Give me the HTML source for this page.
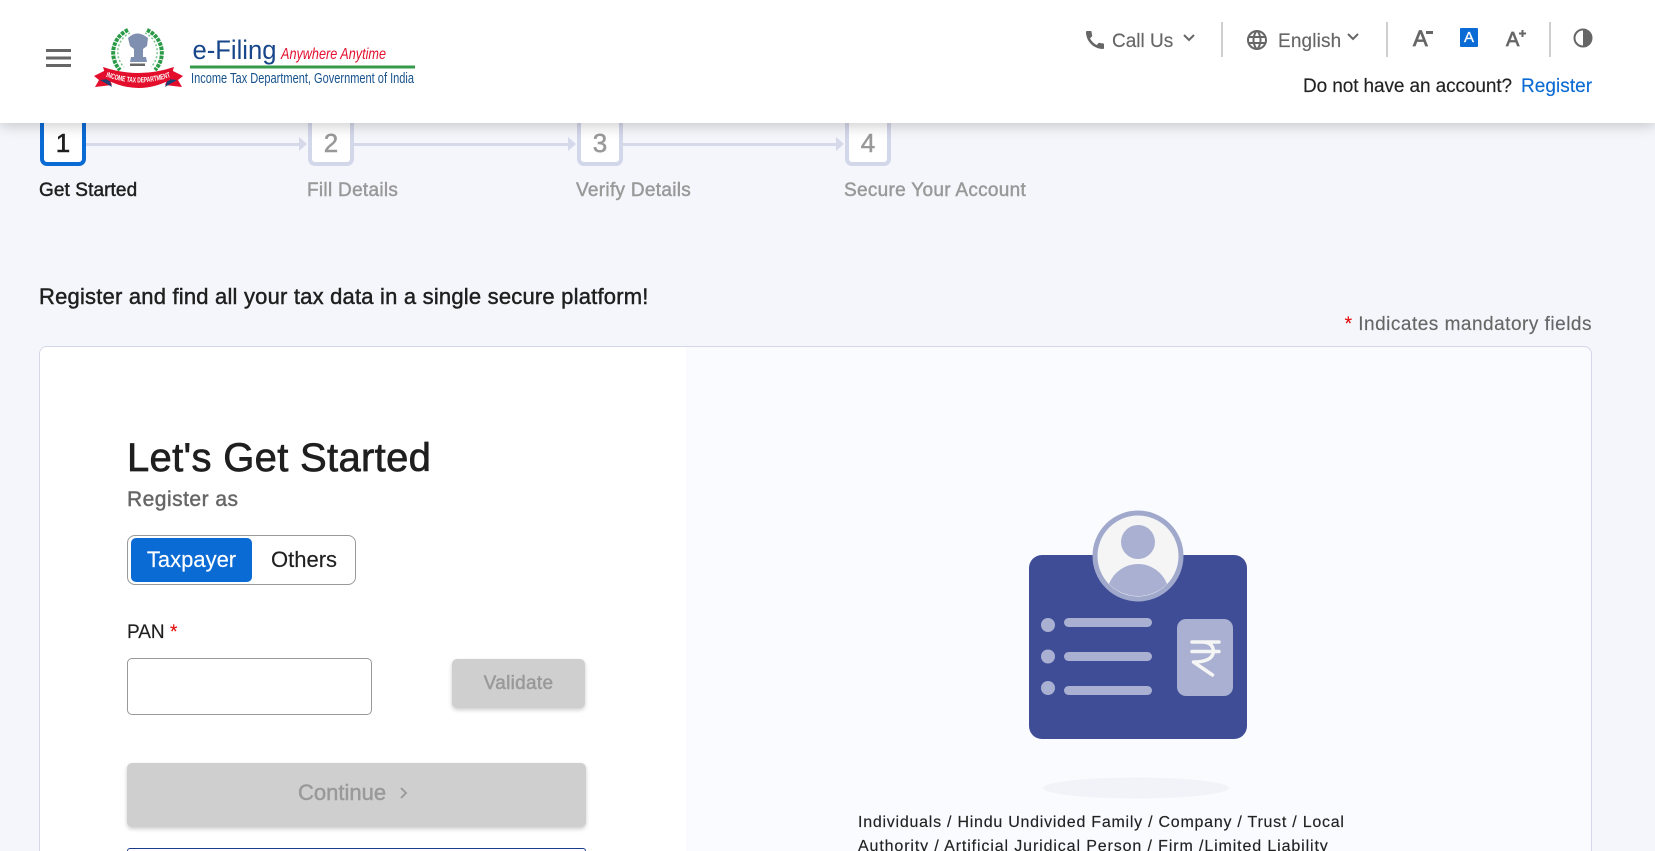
<!DOCTYPE html>
<html lang="en"><head><meta charset="utf-8"><title>Register - e-Filing</title>
<style>
*{box-sizing:border-box}
html{margin:0;padding:0;width:1655px;height:851px;overflow:hidden}
body{margin:0;padding:0;position:relative;width:1655px;height:851px;overflow:hidden;background:#f5f6fb;font-family:"Liberation Sans",sans-serif;color:#1f1f1f;-webkit-text-stroke:.15px}
.t{position:absolute;white-space:nowrap;line-height:24px;height:24px}
.m{-webkit-text-stroke:.45px}
header{position:absolute;left:0;top:0;width:1655px;height:123px;background:#fff;box-shadow:0 2px 14px rgba(0,0,0,.22);z-index:5}
.div{position:absolute;top:22px;width:2px;height:35px;background:#cfcfcf}
.g{color:#666}
.box{position:absolute;top:112px;width:46px;height:54px;border:4px solid #d3d7ea;border-radius:7px;background:#fff;color:#999;font-size:26px;-webkit-text-stroke:.5px;text-align:center;line-height:56px}
.box span{display:block;margin-top:-1px}
.ln{position:absolute;top:142.5px;height:3px;background:#d5d9ea}
.ar{position:absolute;top:137px;width:0;height:0;border-left:8px solid #d5d9ea;border-top:7px solid transparent;border-bottom:7px solid transparent}
.st{font-size:19px;color:#999;top:179px;letter-spacing:.3px}
.card{position:absolute;left:39px;top:346px;width:1553px;height:505px;border:1px solid #d4d7e8;border-bottom:0;border-radius:8px 8px 0 0;background:#fafbfe;overflow:hidden}
.left{position:absolute;left:0;top:0;width:646px;height:100%;background:#fff}
svg text{-webkit-text-stroke:0}
</style></head><body>
<header>
<svg style="position:absolute;left:42px;top:44px" width="32" height="28" viewBox="0 0 32 28"><g fill="#666"><rect x="4" y="5" width="25" height="3"/><rect x="4" y="12.500" width="25" height="3"/><rect x="4" y="20" width="25" height="3"/></g></svg>
<svg style="position:absolute;left:90px;top:26px" width="100" height="68" viewBox="90 26 100 68">
<path d="M128 30A25 25 0 0 0 120 70M147 30A25 25 0 0 1 155 70" fill="none" stroke="#2b9a47" stroke-width="4" stroke-dasharray="3.500 1"/>
<path d="M130 33A21 21 0 0 0 124 67M145 33A21 21 0 0 1 151 67" fill="none" stroke="#7cc08b" stroke-width="1.500" stroke-dasharray="2 2"/>
<path d="M128 38q9-9 20 0l-1 8-4 3v8h3l1 5h-17l1-5h3v-8l-4-3z" fill="#7e8fb0"/>
<rect x="130" y="63.500" width="15" height="2.500" fill="#666"/>
<path d="M106 71L94 77L99 81L95 88L112 86ZM171 71L183 77L178 81L182 88L165 86Z" fill="#e30d2c" transform="translate(0 -1)"/>
<path d="M100 80L109 79L112 87ZM177 80L168 79L165 87Z" fill="#1e3f73"/>
<path d="M103 67Q138.500 79 174 67L170 80Q138.500 96 107 80Z" fill="#e30d2c"/>
<path id="rb" d="M104 76Q138.500 89 173 76" fill="none"/>
<text font-family="Liberation Sans,sans-serif" font-size="7.500" font-weight="700" fill="#fff"><textPath href="#rb" textLength="66" lengthAdjust="spacingAndGlyphs" startOffset="2">INCOME TAX DEPARTMENT</textPath></text>
</svg>
<svg style="position:absolute;left:185px;top:30px" width="240" height="60" viewBox="185 30 240 60">
<text x="192.500" y="59" font-size="27" fill="#17468a" textLength="84" lengthAdjust="spacingAndGlyphs">e-Filing</text>
<text x="281" y="59" font-size="16" font-style="italic" fill="#e4102f" textLength="105" lengthAdjust="spacingAndGlyphs">Anywhere Anytime</text>
<rect x="190" y="65.500" width="225" height="3" fill="#359b4a"/>
<text x="191" y="83" font-size="15" fill="#17528c" textLength="223" lengthAdjust="spacingAndGlyphs">Income Tax Department, Government of India</text>
</svg>
<svg style="position:absolute;left:1083px;top:28px" width="24" height="24" viewBox="0 0 24 24"><path fill="#666" d="M20.010 15.380c-1.230 0-2.420-.2-3.530-.56-.35-.12-.74-.03-1.010.24l-1.570 1.970c-2.830-1.350-5.480-3.900-6.890-6.830l1.950-1.660c.27-.28.35-.67.24-1.020-.37-1.110-.56-2.300-.56-3.530 0-.54-.45-.99-.99-.99H4.190C3.650 3 3 3.240 3 3.990 3 13.280 10.730 21 20.010 21c.71 0 .99-.63.99-1.180v-3.450c0-.54-.45-.99-.99-.99z"/></svg>
<span class="t g" style="left:1112px;top:30px;font-size:19px">Call Us</span>
<svg style="position:absolute;left:1180px;top:29px" width="18" height="18" viewBox="0 0 18 18"><path fill="none" stroke="#666" stroke-width="2" d="M4 6l5 5 5-5"/></svg>
<i class="div" style="left:1221px"></i>
<svg style="position:absolute;left:1245px;top:28px" width="24" height="24" viewBox="0 0 24 24"><path fill="#666" d="M11.990 2C6.470 2 2 6.480 2 12s4.470 10 9.990 10C17.520 22 22 17.520 22 12S17.520 2 11.990 2zm6.930 6h-2.950c-.32-1.250-.78-2.450-1.380-3.560 1.840.63 3.370 1.910 4.330 3.560zM12 4.040c.83 1.200 1.480 2.530 1.910 3.960h-3.820c.43-1.430 1.080-2.760 1.910-3.960zM4.260 14C4.100 13.360 4 12.690 4 12s.1-1.360.26-2h3.380c-.08.66-.14 1.320-.14 2 0 .68.06 1.340.14 2H4.260zm.82 2h2.950c.32 1.250.78 2.450 1.380 3.560-1.840-.63-3.370-1.900-4.330-3.560zm2.950-8H5.080c.96-1.660 2.490-2.930 4.330-3.560C8.810 5.550 8.350 6.750 8.030 8zM12 19.960c-.83-1.200-1.480-2.530-1.910-3.960h3.820c-.43 1.430-1.080 2.760-1.910 3.960zM14.340 14H9.660c-.09-.66-.16-1.320-.16-2 0-.68.07-1.350.16-2h4.680c.09.65.16 1.320.16 2 0 .68-.07 1.340-.16 2zm.25 5.560c.6-1.110 1.060-2.310 1.380-3.560h2.950c-.96 1.650-2.490 2.930-4.330 3.560zM16.360 14c.08-.66.14-1.320.14-2 0-.68-.06-1.340-.14-2h3.380c.16.64.26 1.310.26 2s-.1 1.360-.26 2h-3.380z"/></svg>
<span class="t g" style="left:1278px;top:30px;font-size:19px;letter-spacing:.15px">English</span>
<svg style="position:absolute;left:1344px;top:29px" width="18" height="18" viewBox="0 0 18 18"><path fill="none" stroke="#666" stroke-width="2" d="M4 5l5 5 5-5"/></svg>
<i class="div" style="left:1386px"></i>
<span class="t g" style="left:1413px;top:27px;font-size:22px;width:16px;-webkit-text-stroke:.8px">A</span>
<i style="position:absolute;left:1426px;top:31px;width:7px;height:2.500px;background:#666"></i>
<span style="position:absolute;left:1460px;top:28px;width:18px;height:19px;background:#0b6bd4;border-radius:1px;color:#fff;font-size:15px;text-align:center;line-height:20px;-webkit-text-stroke:.3px">A</span>
<span class="t g" style="left:1506px;top:28px;font-size:20px;-webkit-text-stroke:.7px">A</span>
<svg style="position:absolute;left:1518px;top:29px" width="9" height="9" viewBox="0 0 9 9"><path fill="#666" d="M3.500 1h2v2.500H8v2H5.500V8h-2V5.500H1v-2h2.500z"/></svg>
<i class="div" style="left:1549px"></i>
<svg style="position:absolute;left:1571px;top:26px" width="24" height="24" viewBox="0 0 24 24"><circle cx="12" cy="12" r="8.500" fill="none" stroke="#666" stroke-width="2"/><path fill="#666" d="M12 3a9 9 0 0 1 0 18z"/></svg>
<span class="t" style="left:1303px;top:75px;font-size:19px;color:#222;letter-spacing:-.1px">Do not have an account?</span>
<span class="t" style="left:1521px;top:75px;font-size:19px;color:#0b6bd4;letter-spacing:.05px">Register</span>
</header>

<i class="ln" style="left:86px;width:216px"></i><i class="ar" style="left:299px"></i>
<i class="ln" style="left:354px;width:216px"></i><i class="ar" style="left:568px"></i>
<i class="ln" style="left:623px;width:216px"></i><i class="ar" style="left:836px"></i>
<div class="box" style="left:40px;border-color:#0b6bd4;color:#1f1f1f"><span>1</span></div>
<div class="box" style="left:308px"><span>2</span></div>
<div class="box" style="left:577px"><span>3</span></div>
<div class="box" style="left:845px"><span>4</span></div>
<span class="t st m" style="left:39px;color:#1f1f1f;letter-spacing:.1px">Get Started</span>
<span class="t st m" style="left:307px">Fill Details</span>
<span class="t st m" style="left:576px">Verify Details</span>
<span class="t st m" style="left:844px">Secure Your Account</span>

<span class="t m" style="left:39px;top:285px;font-size:22px;color:#1f1f1f;letter-spacing:.2px">Register and find all your tax data in a single secure platform!</span>
<span class="t" style="right:63px;top:313px;font-size:19px;color:#666;letter-spacing:.5px"><span style="color:#e30d0d">*</span> Indicates mandatory fields</span>

<div class="card"><div class="left"></div></div>

<span class="t m" style="left:127px;top:434px;font-size:40px;line-height:48px;height:48px;color:#1f1f1f;letter-spacing:.31px;-webkit-text-stroke:.7px">Let's Get Started</span>
<span class="t m" style="left:127px;top:488px;font-size:21px;color:#666;letter-spacing:.48px">Register as</span>

<div style="position:absolute;left:127px;top:535px;width:229px;height:50px;border:1px solid #999;border-radius:8px;background:#fff"></div>
<div style="position:absolute;left:131px;top:538px;width:121px;height:44px;background:#0b6bd4;border-radius:5px;color:#fff;font-size:22px;text-align:center;line-height:43px">Taxpayer</div>
<span class="t" style="left:271px;top:548px;font-size:22px;color:#1f1f1f">Others</span>

<span class="t" style="left:127px;top:621px;font-size:19px;color:#1f1f1f">PAN <span style="color:#e30d0d">*</span></span>
<input aria-label="PAN" style="position:absolute;left:127px;top:658px;width:245px;height:57px;border:1px solid #999;border-radius:5px;background:#fff;outline:0">
<div class="m" style="position:absolute;left:452px;top:659px;width:133px;height:49px;background:#cfcfcf;border-radius:5px;box-shadow:0 2px 4px rgba(0,0,0,.2);color:#999;font-size:19px;text-align:center;line-height:50px;letter-spacing:.3px">Validate</div>
<div style="position:absolute;left:127px;top:763px;width:459px;height:64px;background:#cfcfcf;border-radius:5px;box-shadow:0 2px 4px rgba(0,0,0,.2)"></div>
<span class="t m" style="left:298px;top:781px;font-size:22px;color:#999">Continue</span>
<svg style="position:absolute;left:396px;top:784px" width="14" height="18" viewBox="0 0 14 18"><path fill="none" stroke="#999" stroke-width="1.800" d="M5 4l5 5-5 5"/></svg>
<div style="position:absolute;left:127px;top:848px;width:459px;height:3px;border:1px solid #1c3a8c;border-bottom:0;border-radius:5px 5px 0 0;background:#fff"></div>

<svg style="position:absolute;left:1020px;top:500px" width="240" height="300" viewBox="1020 500 240 300">
<ellipse cx="1136" cy="788" rx="93" ry="10.500" fill="#f2f3f9"/>
<rect x="1029" y="555" width="218" height="184" rx="13" fill="#3f4d97"/>
<circle cx="1138" cy="556" r="43" fill="#f5f5f5" stroke="#a0a9cc" stroke-width="5"/>
<circle cx="1138" cy="542" r="17" fill="#a9b0d2"/>
<path d="M1109 584a31 31 0 0 1 58 0a41 41 0 0 1-58 0z" fill="#a9b0d2"/>
<g fill="#a9b0d2">
<circle cx="1048" cy="625" r="7"/><circle cx="1048" cy="656.500" r="7"/><circle cx="1048" cy="688" r="7"/>
<rect x="1064" y="618" width="88" height="9" rx="4.500"/><rect x="1064" y="652" width="88" height="9" rx="4.500"/><rect x="1064" y="686" width="88" height="9" rx="4.500"/>
<rect x="1177" y="619" width="56" height="77" rx="9"/>
</g>
<path d="M1192 642h27M1192 651.500h27M1203 642q10 .5 10.500 9.500q-1 10.500-20 10.500l19 13" fill="none" stroke="#f5f5f5" stroke-width="3.500" stroke-linecap="round" stroke-linejoin="round"/>
</svg>
<span class="t" style="left:858px;top:811px;font-size:16px;letter-spacing:.75px;color:#222">Individuals / Hindu Undivided Family / Company / Trust / Local</span>
<span class="t" style="left:858px;top:835px;height:16px;overflow:hidden;font-size:16px;letter-spacing:.88px;color:#222">Authority / Artificial Juridical Person / Firm /Limited Liability</span>
</body></html>
